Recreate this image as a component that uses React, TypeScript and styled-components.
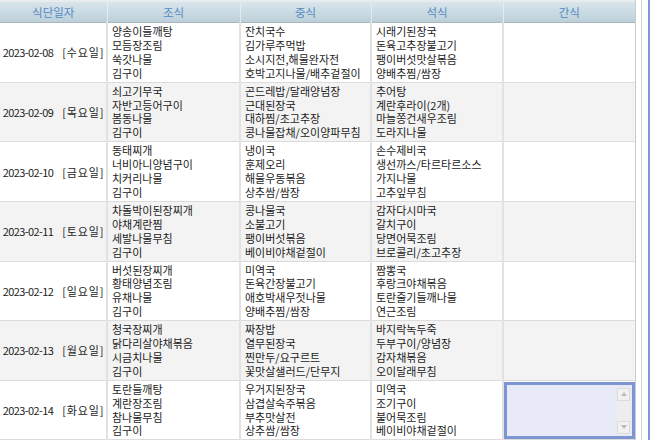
import React from "react";
import styled, { createGlobalStyle } from "styled-components";

const Global = createGlobalStyle`
  html, body { margin: 0; padding: 0; background: #ffffff; }
  body { font-family: "Noto Sans CJK KR", "Liberation Sans", sans-serif; }
`;

const Frame = styled.div`
  display: flex;
  width: 650px;
  height: 440px;
  overflow: hidden;
  background: #fff;
`;

const TableWrap = styled.div`
  width: 635px;
  flex: none;
  border-right: 1px solid #c9cccf;
`;

const Gap = styled.div<{ $w: number }>`
  width: ${(p) => p.$w}px;
  flex: none;
`;

const VLine = styled.div<{ $color: string; $w: number }>`
  width: ${(p) => p.$w}px;
  flex: none;
  background: ${(p) => p.$color};
`;

const Table = styled.table`
  width: 635px;
  border-collapse: collapse;
  table-layout: fixed;
  font-size: 11px;
  color: #1c1c1c;
`;

const HeadCell = styled.th`
  height: 20px;
  padding: 0;
  font-weight: normal;
  font-size: 11.5px;
  color: #5489c4;
  text-align: center;
  background: linear-gradient(#d8e4eb, #bdd0da);
  border-top: 2px solid #e8ecee;
  border-bottom: 1px solid #a9b6bd;
  border-left: 1px solid #e3ebf0;
  &:first-child { border-left: none; }
`;

const Row = styled.tr<{ $alt: boolean }>`
  background: ${(p) => (p.$alt ? "#f3f3f3" : "#ffffff")};
`;

const DateCell = styled.td`
  padding: 0 0 0 1px;
  text-align: center;
  vertical-align: middle;
  white-space: nowrap;
  border-bottom: 1px solid #dcdcdc;
  border-right: 2px solid #e2e2e2;
`;

const DateNum = styled.span`
  letter-spacing: -0.6px;
`;

const DayName = styled.span`
  margin-left: 9px;
  letter-spacing: 0.8px;
`;

const MealCell = styled.td`
  padding: 2px 3px 1px 4px;
  vertical-align: top;
  line-height: 13.9px;
  white-space: nowrap;
  overflow: hidden;
  border-bottom: 1px solid #dcdcdc;
  border-right: 2px solid #e2e2e2;
`;

const SnackCell = styled.td`
  padding: 0;
  vertical-align: top;
  border-bottom: 1px solid #dcdcdc;
`;

const Line = styled.div``;

const Memo = styled.div`
  display: flex;
  height: 51px;
  margin-top: 1px;
  border: 3px solid #7d95d3;
  background: #e8eaf8;
`;

const MemoText = styled.div`
  flex: 1;
`;

const ScrollBar = styled.div`
  width: 13px;
  margin: 3px 2px 2px 0;
  display: flex;
  flex-direction: column;
  justify-content: space-between;
  background: #ecedec;
`;

const ScrollBtn = styled.div`
  height: 11px;
  display: flex;
  align-items: center;
  justify-content: center;
  background: #f1f1ef;
  border: 1px solid #dcdcd8;
`;

const Arrow = styled.div<{ $up: boolean }>`
  width: 0;
  height: 0;
  border-left: 3px solid transparent;
  border-right: 3px solid transparent;
  ${(p) =>
    p.$up ? "border-bottom: 4px solid #b9bcc4;" : "border-top: 4px solid #b9bcc4;"}
`;

type Day = { date: string; day: string; b: string[]; l: string[]; d: string[] };

const days: Day[] = [
  {
    date: "2023-02-08",
    day: "수요일",
    b: ["양송이들깨탕", "모듬장조림", "쑥갓나물", "김구이"],
    l: ["잔치국수", "김가루주먹밥", "소시지전,해물완자전", "호박고지나물/배추겉절이"],
    d: ["시래기된장국", "돈육고추장불고기", "팽이버섯맛살볶음", "양배추찜/쌈장"],
  },
  {
    date: "2023-02-09",
    day: "목요일",
    b: ["쇠고기무국", "자반고등어구이", "봄동나물", "김구이"],
    l: ["곤드레밥/달래양념장", "근대된장국", "대하찜/초고추장", "콩나물잡채/오이양파무침"],
    d: ["추어탕", "계란후라이(2개)", "마늘쫑건새우조림", "도라지나물"],
  },
  {
    date: "2023-02-10",
    day: "금요일",
    b: ["동태찌개", "너비아니양념구이", "치커리나물", "김구이"],
    l: ["냉이국", "훈제오리", "해물우동볶음", "상추쌈/쌈장"],
    d: ["손수제비국", "생선까스/타르타르소스", "가지나물", "고추잎무침"],
  },
  {
    date: "2023-02-11",
    day: "토요일",
    b: ["차돌박이된장찌개", "야채계란찜", "세발나물무침", "김구이"],
    l: ["콩나물국", "소불고기", "팽이버섯볶음", "베이비야채겉절이"],
    d: ["감자다시마국", "갈치구이", "당면어묵조림", "브로콜리/초고추장"],
  },
  {
    date: "2023-02-12",
    day: "일요일",
    b: ["버섯된장찌개", "황태양념조림", "유채나물", "김구이"],
    l: ["미역국", "돈육간장불고기", "애호박새우젓나물", "양배추찜/쌈장"],
    d: ["짬뽕국", "후랑크야채볶음", "토란줄기들깨나물", "연근조림"],
  },
  {
    date: "2023-02-13",
    day: "월요일",
    b: ["청국장찌개", "닭다리살야채볶음", "시금치나물", "김구이"],
    l: ["짜장밥", "열무된장국", "찐만두/요구르트", "꽃맛살샐러드/단무지"],
    d: ["바지락녹두죽", "두부구이/양념장", "감자채볶음", "오이달래무침"],
  },
  {
    date: "2023-02-14",
    day: "화요일",
    b: ["토란들깨탕", "계란장조림", "참나물무침", "김구이"],
    l: ["우거지된장국", "삼겹살숙주볶음", "부추맛살전", "상추쌈/쌈장"],
    d: ["미역국", "조기구이", "불어묵조림", "베이비야채겉절이"],
  },
];

const Meal = ({ items }: { items: string[] }) => (
  <MealCell>
    {items.map((t, i) => (
      <Line key={i}>{t}</Line>
    ))}
  </MealCell>
);

export default function App() {
  return (
    <>
      <Global />
      <Frame>
        <TableWrap>
          <Table>
            <colgroup>
              <col style={{ width: 107 }} />
              <col style={{ width: 133 }} />
              <col style={{ width: 131 }} />
              <col style={{ width: 132 }} />
              <col style={{ width: 132 }} />
            </colgroup>
            <thead>
              <tr>
                <HeadCell>식단일자</HeadCell>
                <HeadCell>조식</HeadCell>
                <HeadCell>중식</HeadCell>
                <HeadCell>석식</HeadCell>
                <HeadCell>간식</HeadCell>
              </tr>
            </thead>
            <tbody>
              {days.map((d, i) => (
                <Row key={d.date} $alt={i % 2 === 1}>
                  <DateCell>
                    <DateNum>{d.date}</DateNum>
                    <DayName>[{d.day}]</DayName>
                  </DateCell>
                  <Meal items={d.b} />
                  <Meal items={d.l} />
                  <Meal items={d.d} />
                  <SnackCell>
                    {i === days.length - 1 && (
                      <Memo>
                        <MemoText />
                        <ScrollBar>
                          <ScrollBtn>
                            <Arrow $up />
                          </ScrollBtn>
                          <ScrollBtn>
                            <Arrow $up={false} />
                          </ScrollBtn>
                        </ScrollBar>
                      </Memo>
                    )}
                  </SnackCell>
                </Row>
              ))}
            </tbody>
          </Table>
        </TableWrap>
        <Gap $w={5} />
        <VLine $color="#d2d4d6" $w={1} />
        <Gap $w={6} />
        <VLine $color="#7f97d4" $w={3} />
      </Frame>
    </>
  );
}
